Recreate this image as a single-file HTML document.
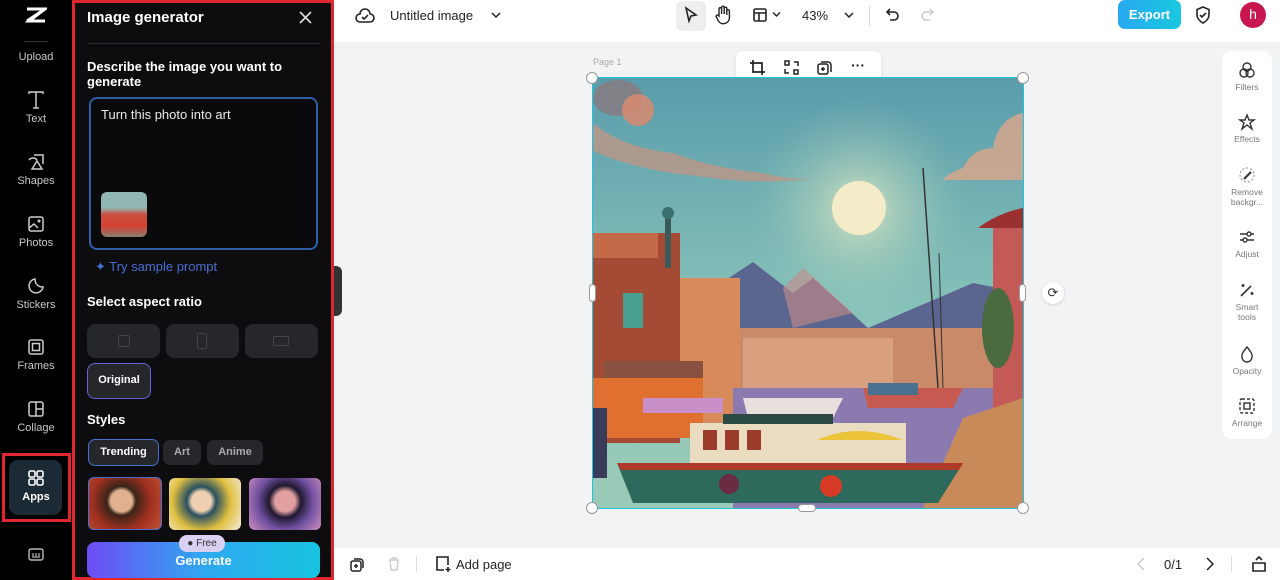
<!DOCTYPE html>
<html><head><meta charset="utf-8"><style>
*{box-sizing:border-box;margin:0;padding:0}
body{width:1280px;height:580px;overflow:hidden;font-family:"Liberation Sans",sans-serif;background:#f2f3f5;position:relative}
.rail{position:absolute;left:0;top:0;width:72px;height:580px;background:#000}
.rail .it{position:absolute;left:0;width:72px;text-align:center;color:#c8c8c8;font-size:11px}
.rail svg{display:block;margin:0 auto 3px}
.panel{position:absolute;left:72px;top:0;width:262px;height:580px;background:#0d0d10;border:3px solid #e0262e;color:#fff}
.top{position:absolute;left:334px;top:0;right:0;height:42px;background:#fff}
.bot{position:absolute;left:334px;bottom:0;right:0;height:32px;background:#fff}
.abs{position:absolute}
.chip{position:absolute;background:#26272b;border-radius:8px}
.rtool{position:absolute;left:1222px;top:51px;width:50px;height:388px;background:#fff;border-radius:10px}
.rtool .t{position:absolute;left:0;width:50px;text-align:center;font-size:8.5px;color:#777;line-height:10px}
.rtool svg{display:block;margin:0 auto 3px}
</style></head><body>

<div class="rail">
  <svg class="abs" style="left:25px;top:6px" width="22" height="18" viewBox="0 0 22 18"><path d="M2 3h18L4 15h16M2 15L20 3" stroke="#fff" stroke-width="3" fill="none"/></svg>
  <div style="position:absolute;left:24px;top:41px;width:24px;height:1px;background:#333"></div>
  <div class="it" style="top:51px">Upload</div>
  <div class="it" style="top:90px"><svg width="20" height="20" viewBox="0 0 20 20"><path d="M3 4V2h14v2M10 2v16M7 18h6" stroke="#ccc" stroke-width="1.5" fill="none"/></svg>Text</div>
  <div class="it" style="top:152px"><svg width="20" height="20" viewBox="0 0 20 20"><path d="M8 3h9v9M3 8a5 5 0 0 1 8 0M6 17l5-8 5 8z" stroke="#ccc" stroke-width="1.5" fill="none"/></svg>Shapes</div>
  <div class="it" style="top:214px"><svg width="20" height="20" viewBox="0 0 20 20"><rect x="3" y="3" width="14" height="14" rx="2" stroke="#ccc" stroke-width="1.5" fill="none"/><circle cx="13" cy="7" r="1.5" fill="#ccc"/><path d="M3 14l5-4 4 4" stroke="#ccc" stroke-width="1.5" fill="none"/></svg>Photos</div>
  <div class="it" style="top:276px"><svg width="20" height="20" viewBox="0 0 20 20"><path d="M17 11A7 7 0 1 1 9 3c0 5 3 8 8 8z" stroke="#ccc" stroke-width="1.5" fill="none"/></svg>Stickers</div>
  <div class="it" style="top:337px"><svg width="20" height="20" viewBox="0 0 20 20"><rect x="3" y="3" width="14" height="14" rx="2" stroke="#ccc" stroke-width="1.5" fill="none"/><rect x="6.5" y="6.5" width="7" height="7" stroke="#ccc" stroke-width="1.5" fill="none"/></svg>Frames</div>
  <div class="it" style="top:399px"><svg width="20" height="20" viewBox="0 0 20 20"><rect x="3" y="3" width="14" height="14" rx="2" stroke="#ccc" stroke-width="1.5" fill="none"/><path d="M10 3v14M10 10h7" stroke="#ccc" stroke-width="1.5"/></svg>Collage</div>
  <div style="position:absolute;left:2px;top:453px;width:69px;height:69px;border:3px solid #e0262e"></div>
  <div style="position:absolute;left:9px;top:460px;width:53px;height:55px;background:#1c2a35;border-radius:9px"></div>
  <div class="it" style="top:468px;color:#fff;font-weight:bold"><svg width="20" height="20" viewBox="0 0 20 20"><g stroke="#fff" stroke-width="1.6" fill="none"><rect x="3" y="3" width="6" height="6" rx="1.5"/><rect x="11" y="3" width="6" height="6" rx="1.5"/><rect x="3" y="11" width="6" height="6" rx="1.5"/><rect x="11" y="11" width="6" height="6" rx="1.5"/></g></svg>Apps</div>
  <svg class="abs" style="left:28px;top:548px" width="16" height="14" viewBox="0 0 16 14"><rect x="1" y="1" width="14" height="11" rx="2" stroke="#bbb" stroke-width="1.4" fill="none"/><path d="M5 5v3M8 5v3M11 5v3M4 9h8" stroke="#bbb" stroke-width="1.2"/></svg>
</div>

<div class="panel">
  <div class="abs" style="left:12px;top:6px;font-size:15px;font-weight:bold">Image generator</div>
  <svg class="abs" style="left:224px;top:8px" width="13" height="13" viewBox="0 0 13 13"><path d="M1 1l11 11M12 1L1 12" stroke="#ddd" stroke-width="1.6"/></svg>
  <div class="abs" style="left:12px;top:40px;width:233px;height:1px;background:#2a2a2e"></div>
  <div class="abs" style="left:12px;top:56px;font-size:13px;font-weight:bold;line-height:15px;width:230px">Describe the image you want to generate</div>
  <div class="abs" style="left:14px;top:94px;width:229px;height:153px;border:2px solid #2f5ea8;border-radius:8px;background:#0a0a0c"></div>
  <div class="abs" style="left:26px;top:104px;font-size:13px;color:#e8e8e8">Turn this photo into art</div>
  <div class="abs" style="left:26px;top:189px;width:46px;height:45px;border-radius:6px;background:linear-gradient(#8fb6b0 0 35%,#c95040 50%,#d44030 75%,#8a8070)"></div>
  <div class="abs" style="left:20px;top:256px;font-size:13px;color:#4a6fd0">✦ Try sample prompt</div>
  <div class="abs" style="left:12px;top:291px;font-size:13px;font-weight:bold">Select aspect ratio</div>
  <div class="chip" style="left:12px;top:321px;width:73px;height:34px"><div class="abs" style="left:31px;top:11px;width:12px;height:12px;border:1.5px solid #444;border-radius:2px"></div></div>
  <div class="chip" style="left:91px;top:321px;width:73px;height:34px"><div class="abs" style="left:31px;top:9px;width:10px;height:16px;border:1.5px solid #444;border-radius:2px"></div></div>
  <div class="chip" style="left:170px;top:321px;width:73px;height:34px"><div class="abs" style="left:28px;top:12px;width:16px;height:10px;border:1.5px solid #444;border-radius:2px"></div></div>
  <div class="chip" style="left:12px;top:360px;width:64px;height:36px;border:1.5px solid #6a63d8;font-size:11px;font-weight:bold;text-align:center;line-height:33px">Original</div>
  <div class="abs" style="left:12px;top:409px;font-size:13px;font-weight:bold">Styles</div>
  <div class="chip" style="left:13px;top:436px;width:71px;height:27px;border:1.5px solid #4a6fd0;font-size:11px;font-weight:bold;text-align:center;line-height:24px;border-radius:7px">Trending</div>
  <div class="chip" style="left:88px;top:437px;width:38px;height:25px;font-size:11px;font-weight:bold;color:#aaa;text-align:center;line-height:25px;border-radius:7px">Art</div>
  <div class="chip" style="left:132px;top:437px;width:56px;height:25px;font-size:11px;font-weight:bold;color:#aaa;text-align:center;line-height:25px;border-radius:7px">Anime</div>
  <div class="abs" style="left:13px;top:474px;width:74px;height:53px;border:1.5px solid #4a6fd0;border-radius:6px;background:radial-gradient(circle at 45% 45%,#e0b090 0 22%,#3a2418 30%,#a03020 60%,#c05030)"></div>
  <div class="abs" style="left:94px;top:475px;width:72px;height:52px;border-radius:6px;background:radial-gradient(circle at 45% 45%,#f0d0b0 0 20%,#2a5060 30%,#e0c040 60%,#f5eee0)"></div>
  <div class="abs" style="left:174px;top:475px;width:72px;height:52px;border-radius:6px;background:radial-gradient(circle at 50% 45%,#e0a0a0 0 22%,#201830 35%,#7050a0 60%,#d090c0)"></div>
  <div class="abs" style="left:12px;top:539px;width:233px;height:36px;border-radius:8px;background:linear-gradient(90deg,#6e4cf5,#2fa8f0,#17c4e0);font-size:13px;font-weight:bold;text-align:center;line-height:38px">Generate</div>
  <div class="abs" style="left:104px;top:532px;width:46px;height:17px;border-radius:8px;background:#d9d0f2;color:#333;font-size:10px;line-height:17px;text-align:center">● Free</div>
</div>
<div class="abs" style="left:334px;top:266px;width:8px;height:50px;background:#333;border-radius:0 6px 6px 0"></div>

<div class="top">
  <svg class="abs" style="left:20px;top:5px" width="22" height="22" viewBox="0 0 22 22"><path d="M6 17a4 4 0 0 1 0-8 5 5 0 0 1 10 0 4 4 0 0 1 0 8z M8 12l2 2 4-4" stroke="#222" stroke-width="1.6" fill="none"/></svg>
  <div class="abs" style="left:56px;top:8px;font-size:13px;color:#222">Untitled image</div>
  <svg class="abs" style="left:157px;top:11px" width="10" height="8" viewBox="0 0 10 8"><path d="M1 2l4 4 4-4" stroke="#222" stroke-width="1.5" fill="none"/></svg>
  <div class="abs" style="left:342px;top:1px;width:30px;height:30px;background:#eceef0;border-radius:6px"></div>
  <svg class="abs" style="left:349px;top:6px" width="16" height="18" viewBox="0 0 16 18"><path d="M3 2l10 7-5 1-2 5z" stroke="#222" stroke-width="1.6" fill="none"/></svg>
  <svg class="abs" style="left:380px;top:5px" width="18" height="20" viewBox="0 0 18 20"><path d="M5 11V4a1.3 1.3 0 0 1 2.6 0v5V2.5a1.3 1.3 0 0 1 2.6 0V9V3.5a1.3 1.3 0 0 1 2.6 0V10V6a1.3 1.3 0 0 1 2.6 0v7a6 6 0 0 1-11 3l-2-4a1.3 1.3 0 0 1 2.2-1.4z" stroke="#222" stroke-width="1.4" fill="none"/></svg>
  <svg class="abs" style="left:418px;top:7px" width="16" height="16" viewBox="0 0 16 16"><rect x="2" y="2" width="12" height="12" rx="1.5" stroke="#222" stroke-width="1.6" fill="none"/><path d="M2 6h12M7 6v8" stroke="#222" stroke-width="1.6"/></svg>
  <svg class="abs" style="left:438px;top:11px" width="9" height="7" viewBox="0 0 9 7"><path d="M1 1.5l3.5 3.5 3.5-3.5" stroke="#222" stroke-width="1.4" fill="none"/></svg>
  <div class="abs" style="left:468px;top:8px;font-size:13px;color:#222">43%</div>
  <svg class="abs" style="left:510px;top:11px" width="10" height="8" viewBox="0 0 10 8"><path d="M1 2l4 4 4-4" stroke="#222" stroke-width="1.5" fill="none"/></svg>
  <div class="abs" style="left:535px;top:6px;width:1px;height:20px;background:#ddd"></div>
  <svg class="abs" style="left:550px;top:6px" width="18" height="18" viewBox="0 0 18 18"><path d="M6 3L3 6l3 3M3 6h7a4 4 0 0 1 0 8H6" stroke="#222" stroke-width="1.6" fill="none"/></svg>
  <svg class="abs" style="left:584px;top:6px" width="18" height="18" viewBox="0 0 18 18"><path d="M12 3l3 3-3 3M15 6H8a4 4 0 0 0 0 8h4" stroke="#ccc" stroke-width="1.6" fill="none"/></svg>
  <div class="abs" style="left:784px;top:0px;width:63px;height:29px;border-radius:7px;background:linear-gradient(90deg,#29a8f0,#18c8e0);color:#fff;font-size:13px;font-weight:bold;text-align:center;line-height:29px">Export</div>
  <svg class="abs" style="left:860px;top:5px" width="18" height="20" viewBox="0 0 18 20"><path d="M9 2l6 2.5v5c0 4-3 7-6 8.5-3-1.5-6-4.5-6-8.5v-5z M6 10l2 2 4-4" stroke="#222" stroke-width="1.6" fill="none"/></svg>
  <div class="abs" style="left:906px;top:2px;width:26px;height:26px;border-radius:50%;background:#c8174f;color:#fff;font-size:14px;text-align:center;line-height:25px">h</div>
</div>

<div class="abs" style="left:593px;top:57px;font-size:9px;color:#aaa">Page 1</div>
<div class="abs" style="left:736px;top:51px;width:145px;height:33px;background:#fff;border-radius:7px;box-shadow:0 1px 4px rgba(0,0,0,.1)"></div>
<svg class="abs" style="left:749px;top:59px" width="17" height="17" viewBox="0 0 17 17"><path d="M4 1v12h12M1 4h12v12" stroke="#222" stroke-width="1.7" fill="none"/></svg>
<svg class="abs" style="left:783px;top:59px" width="17" height="17" viewBox="0 0 17 17"><g stroke="#222" stroke-width="1.5" fill="none"><rect x="2" y="2" width="4" height="4"/><rect x="11" y="11" width="4" height="4"/><path d="M11 3h4v4M6 14H2v-4"/></g></svg>
<svg class="abs" style="left:816px;top:59px" width="17" height="17" viewBox="0 0 17 17"><g stroke="#222" stroke-width="1.5" fill="none"><rect x="2" y="5" width="10" height="10" rx="2"/><path d="M5 3h7a3 3 0 0 1 3 3v7M7 8v4M5 10h4"/></g></svg>
<div class="abs" style="left:851px;top:57px;font-size:14px;color:#222;font-weight:bold">···</div>

<svg class="abs" style="left:593px;top:78px" width="430" height="430" viewBox="0 0 430 430">
<defs><linearGradient id="sky" x1="0" y1="0" x2="0" y2="1"><stop offset="0" stop-color="#5a9cab"/><stop offset=".6" stop-color="#8cc6bb"/><stop offset="1" stop-color="#9ccab8"/></linearGradient>
<radialGradient id="glow"><stop offset="0" stop-color="#f6efc8" stop-opacity=".9"/><stop offset=".3" stop-color="#d8e6c0" stop-opacity=".5"/><stop offset="1" stop-color="#9ccab8" stop-opacity="0"/></radialGradient></defs>
<rect width="430" height="430" fill="url(#sky)"/>
<circle cx="266" cy="130" r="110" fill="url(#glow)"/>
<circle cx="266" cy="130" r="27" fill="#f4ecc8"/>
<ellipse cx="25" cy="20" rx="25" ry="18" fill="#8a7a80" opacity=".8"/>
<circle cx="45" cy="32" r="16" fill="#d88a70" opacity=".85"/>
<path d="M0 45q30 25 80 30q40 15 90 20q30 8 55 5q-60 8-120-2q-60-5-105-25z" fill="#b8988a" opacity=".85"/>
<path d="M430 35q-25 5-30 35q-20 0-30 20q-15 5-20 12l80 0z" fill="#d6a68c" opacity=".85"/>
<path d="M60 250L160 184L200 215L220 200L275 250L380 205L430 215V300H60z" fill="#5a6690"/>
<path d="M190 210L210 190L260 235L200 250z" fill="#c98a8a" opacity=".6"/>
<rect x="0" y="250" width="430" height="60" fill="#c88a68"/>
<rect x="150" y="260" width="150" height="60" fill="#d9a080"/>
<rect x="0" y="155" width="87" height="210" fill="#a44a35"/>
<rect x="0" y="155" width="65" height="25" fill="#c46a48"/>
<rect x="72" y="135" width="6" height="55" fill="#3a5a5a"/><circle cx="75" cy="135" r="6" fill="#3a7070"/>
<rect x="87" y="200" width="60" height="160" fill="#d98a5a"/>
<rect x="30" y="215" width="20" height="35" fill="#4aa090"/>
<rect x="10" y="283" width="100" height="20" fill="#8a5040"/>
<rect x="0" y="300" width="110" height="60" fill="#e07030"/>
<rect x="50" y="320" width="80" height="15" fill="#c98fc8"/>
<rect x="140" y="310" width="290" height="120" fill="#8a7ab0"/>
<path d="M150 320h100l-10 20h-85z" fill="#e8e0dc"/>
<path d="M270 310h100l-10 20h-85z" fill="#c65a50"/>
<path d="M275 305h50v12h-50z" fill="#4a7090"/>
<rect x="400" y="145" width="30" height="200" fill="#c45a55"/>
<path d="M385 150q20-15 45-20v20z" fill="#9a3030"/>
<ellipse cx="405" cy="250" rx="16" ry="40" fill="#4a6a40"/>
<path d="M370 340L430 320V430H330z" fill="#c88a58"/>
<line x1="330" y1="90" x2="345" y2="310" stroke="#333" stroke-width="1.5"/>
<line x1="346" y1="175" x2="350" y2="310" stroke="#333" stroke-width="1"/>
<rect x="97" y="345" width="216" height="42" fill="#eadcc0"/>
<rect x="110" y="352" width="14" height="20" fill="#9a3a2a"/><rect x="132" y="352" width="14" height="20" fill="#9a3a2a"/><rect x="154" y="352" width="14" height="20" fill="#9a3a2a"/>
<path d="M224 362q40-18 86 0z" fill="#ecc43a"/>
<rect x="130" y="336" width="110" height="10" fill="#2c4a44"/>
<path d="M24 385H370L345 425H40z" fill="#2e6a5c"/>
<path d="M24 385H370L366 392H28z" fill="#b03a28"/>
<circle cx="238" cy="408" r="11" fill="#d83a28"/>
<circle cx="136" cy="406" r="10" fill="#6a2a40"/>
<rect x="0" y="330" width="14" height="70" fill="#3a3a5a"/>
</svg>
<div class="abs" style="left:592px;top:77px;width:432px;height:432px;border:1.5px solid #1fc4e0"></div>
<div class="abs" style="left:586px;top:72px;width:12px;height:12px;border-radius:50%;background:#fff;border:1px solid #999"></div>
<div class="abs" style="left:1017px;top:72px;width:12px;height:12px;border-radius:50%;background:#fff;border:1px solid #999"></div>
<div class="abs" style="left:586px;top:502px;width:12px;height:12px;border-radius:50%;background:#fff;border:1px solid #999"></div>
<div class="abs" style="left:1017px;top:502px;width:12px;height:12px;border-radius:50%;background:#fff;border:1px solid #999"></div>
<div class="abs" style="left:589px;top:284px;width:7px;height:18px;border-radius:4px;background:#fff;border:1px solid #999"></div>
<div class="abs" style="left:1019px;top:284px;width:7px;height:18px;border-radius:4px;background:#fff;border:1px solid #999"></div>
<div class="abs" style="left:798px;top:504px;width:18px;height:8px;border-radius:4px;background:#fff;border:1px solid #999"></div>
<div class="abs" style="left:1042px;top:282px;width:22px;height:22px;border-radius:50%;background:#fff;box-shadow:0 1px 3px rgba(0,0,0,.15);font-size:13px;text-align:center;line-height:22px;color:#333">⟳</div>

<div class="rtool">
  <div class="t" style="top:10px"><svg width="18" height="18" viewBox="0 0 18 18"><g stroke="#333" stroke-width="1.4" fill="none"><circle cx="9" cy="6" r="4"/><circle cx="6" cy="12" r="4"/><circle cx="12" cy="12" r="4"/></g></svg>Filters</div>
  <div class="t" style="top:62px"><svg width="18" height="18" viewBox="0 0 18 18"><path d="M9 2l2 5h5l-4 3 2 6-5-4-5 4 2-6-4-3h5z" stroke="#333" stroke-width="1.4" fill="none"/></svg>Effects</div>
  <div class="t" style="top:115px"><svg width="18" height="18" viewBox="0 0 18 18"><circle cx="9" cy="9" r="7" stroke="#999" stroke-width="1.2" stroke-dasharray="2 2" fill="none"/><path d="M6 13l7-7" stroke="#333" stroke-width="2"/></svg>Remove<br>backgr...</div>
  <div class="t" style="top:177px"><svg width="18" height="18" viewBox="0 0 18 18"><g stroke="#333" stroke-width="1.4" fill="none"><path d="M2 6h14M2 12h14"/><circle cx="11" cy="6" r="2" fill="#fff"/><circle cx="7" cy="12" r="2" fill="#fff"/></g></svg>Adjust</div>
  <div class="t" style="top:230px"><svg width="18" height="18" viewBox="0 0 18 18"><path d="M3 15L13 5M5 3v3M3.5 4.5h3M14 11v3M12.5 12.5h3" stroke="#333" stroke-width="1.6"/></svg>Smart<br>tools</div>
  <div class="t" style="top:294px"><svg width="18" height="18" viewBox="0 0 18 18"><path d="M9 2q6 7 5 10a5 5 0 0 1-10 0q-1-3 5-10z" stroke="#333" stroke-width="1.4" fill="none"/></svg>Opacity</div>
  <div class="t" style="top:346px"><svg width="18" height="18" viewBox="0 0 18 18"><rect x="2" y="2" width="14" height="14" rx="2" stroke="#333" stroke-width="1.4" stroke-dasharray="3 2" fill="none"/><rect x="6" y="6" width="6" height="6" stroke="#333" stroke-width="1.4" fill="none"/></svg>Arrange</div>
</div>

<div class="bot">
  <svg class="abs" style="left:15px;top:8px" width="16" height="17" viewBox="0 0 16 17"><g stroke="#222" stroke-width="1.5" fill="none"><rect x="2" y="5" width="10" height="10" rx="2"/><path d="M5 3h6a3 3 0 0 1 3 3v6M7 8v4M5 10h4"/></g></svg>
  <svg class="abs" style="left:53px;top:8px" width="14" height="16" viewBox="0 0 14 16"><path d="M2 4h10M5 4V2h4v2M3 4l1 10h6l1-10" stroke="#ccc" stroke-width="1.4" fill="none"/></svg>
  <div class="abs" style="left:82px;top:8px;width:1px;height:16px;background:#ddd"></div>
  <svg class="abs" style="left:100px;top:7px" width="18" height="18" viewBox="0 0 18 18"><path d="M10 15H3V2h11v8M14 12v5M11.5 14.5h5" stroke="#222" stroke-width="1.6" fill="none"/></svg>
  <div class="abs" style="left:122px;top:9px;font-size:13px;color:#222">Add page</div>
  <svg class="abs" style="left:802px;top:9px" width="10" height="14" viewBox="0 0 10 14"><path d="M8 1L2 7l6 6" stroke="#ccc" stroke-width="1.5" fill="none"/></svg>
  <div class="abs" style="left:830px;top:9px;font-size:13px;color:#222">0/1</div>
  <svg class="abs" style="left:871px;top:9px" width="10" height="14" viewBox="0 0 10 14"><path d="M2 1l6 6-6 6" stroke="#222" stroke-width="1.5" fill="none"/></svg>
  <div class="abs" style="left:897px;top:8px;width:1px;height:16px;background:#ddd"></div>
  <svg class="abs" style="left:917px;top:7px" width="16" height="18" viewBox="0 0 16 18"><path d="M2 8h12v8H2zM5 5l3-3 3 3" stroke="#222" stroke-width="1.6" fill="none"/></svg>
</div>
</body></html>
